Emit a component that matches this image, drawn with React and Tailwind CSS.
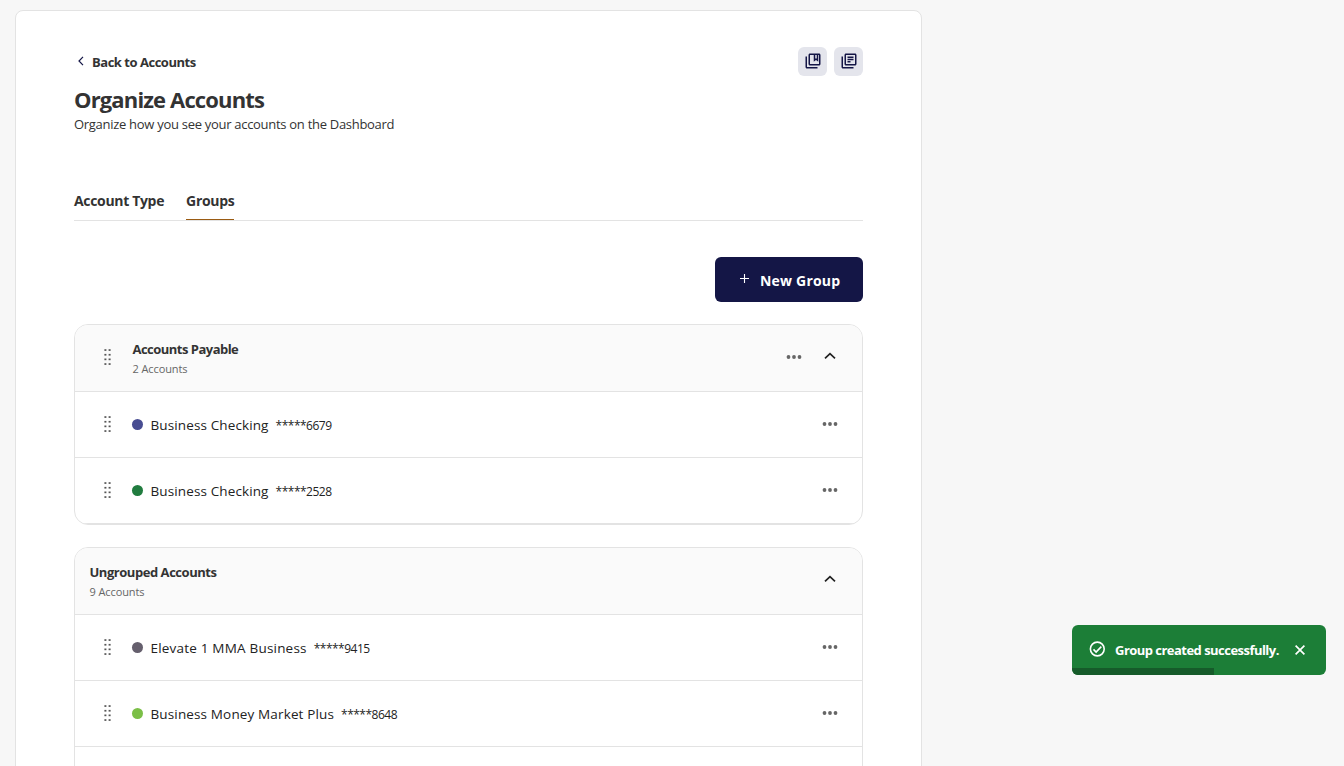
import React from 'react';
import { MdOutlineCollectionsBookmark, MdOutlineLibraryBooks } from 'react-icons/md';

const GROUPS = [
    {
        name: 'Accounts Payable',
        count: 2,
        custom: true,
        nameClass: 'tracking-[-0.52px]',
        accounts: [
            { name: 'Business Checking', number: '*****6679', dot: 'bg-[#484d92]', nameClass: 'tracking-[0.12px]' },
            { name: 'Business Checking', number: '*****2528', dot: 'bg-[#217c3f]', nameClass: 'tracking-[0.12px]' },
        ],
    },
    {
        name: 'Ungrouped Accounts',
        count: 9,
        custom: false,
        nameClass: 'tracking-[-0.46px]',
        accounts: [
            { name: 'Elevate 1 MMA Business', number: '*****9415', dot: 'bg-[#655f6d]', nameClass: 'tracking-[0.2px]' },
            { name: 'Business Money Market Plus', number: '*****8648', dot: 'bg-[#7bbf47]', nameClass: 'tracking-[0.14px]' },
        ],
    },
];

const DragHandle = () => (
    <svg width="7" height="16" viewBox="0 0 7 16" fill="#555" className="mb-0.5 shrink-0">
        {[0.2, 4.9, 9.5, 14.2].map((y) => (
            <React.Fragment key={y}>
                <rect x="0.4" y={y} width="2" height="1.7" />
                <rect x="4.6" y={y} width="2" height="1.7" />
            </React.Fragment>
        ))}
    </svg>
);

const MoreButton = () => (
    <button className="mb-0.5 flex h-6 w-6 items-center justify-center">
        <svg width="16" height="4" viewBox="0 0 16 4" fill="#666">
            <circle cx="2.5" cy="2" r="1.9" />
            <circle cx="8" cy="2" r="1.9" />
            <circle cx="13.5" cy="2" r="1.9" />
        </svg>
    </button>
);

const Collapse = () => (
    <button className="mb-1 flex h-6 w-6 items-center justify-center">
        <svg width="12" height="8" viewBox="0 0 12 8" fill="none" stroke="#222" strokeWidth="1.7">
            <path d="M1 6.4 6 1.6 11 6.4" />
        </svg>
    </button>
);

const AccountRow = ({ account }) => (
    <div className="flex h-[66px] items-center border-b border-[#e3e3e3] pr-5 pl-[29px]">
        <DragHandle />
        <span className={`ml-[21px] h-[11px] w-[11px] rounded-full ${account.dot}`} />
        <span className={`mt-0.5 ml-[7.5px] text-[13.5px] text-[#222] ${account.nameClass}`}>{account.name}</span>
        <span className="mt-0.5 ml-[7px] text-[12px] tracking-[-0.5px] text-[#222]">{account.number}</span>
        <div className="ml-auto">
            <MoreButton />
        </div>
    </div>
);

const Group = ({ group }) => (
    <section className={`overflow-hidden rounded-[14px] border border-[#e3e3e3] ${group.custom ? '' : 'h-[300px]'}`}>
        <div className={`flex h-[67px] items-center border-b border-[#e3e3e3] bg-[#fafafa] pr-5 ${group.custom ? 'pl-[29px]' : 'pl-3.5'}`}>
            {group.custom && <DragHandle />}
            <div className={`mt-0.5 ${group.custom ? 'ml-[21.5px]' : 'ml-[0.5px]'}`}>
                <h2 className={`text-[13px] leading-5 font-bold text-[#333] ${group.nameClass}`}>{group.name}</h2>
                <p className="text-[11px] leading-5 tracking-[-0.1px] text-[#666]">{group.count} Accounts</p>
            </div>
            <div className="ml-auto flex items-center gap-3">
                {group.custom && <MoreButton />}
                <Collapse />
            </div>
        </div>
        {group.accounts.map((account) => (
            <AccountRow key={account.number} account={account} />
        ))}
        {!group.custom && <div className="h-[66px] border-b border-[#e3e3e3]" />}
    </section>
);

const Toast = () => (
    <div className="absolute top-[625px] left-[1072px] flex h-[50px] w-[254px] items-center overflow-hidden rounded-md bg-[#1c7e37] pl-[17px] text-white">
        <svg width="16" height="16" viewBox="0 0 16 16" fill="none" stroke="#fff" strokeWidth="1.6" className="mb-0.5">
            <circle cx="8.3" cy="8" r="6.9" />
            <path d="M4.5 8.4 7.1 11 12.3 5.6" />
        </svg>
        <span className="mt-0.5 ml-[10px] text-[13px] font-bold tracking-[-0.53px] whitespace-nowrap">Group created successfully.</span>
        <svg width="10" height="10" viewBox="0 0 10 10" stroke="#fff" strokeWidth="1.7" className="mr-[21px] ml-auto">
            <path d="M.6.6 9.4 9.4M9.4.6.6 9.4" />
        </svg>
        <div className="absolute bottom-0 left-0 h-[7px] w-[142px] bg-[#165b2a]" />
    </div>
);

export default function App() {
    return (
        <div className="relative h-screen overflow-hidden bg-[#f7f7f7] pt-2.5 pl-[15px] font-['Open_Sans','Noto_Sans',sans-serif] text-[#333]">
            <main className="h-[900px] w-[907px] rounded-lg border border-[#e3e3e3] bg-white px-[58px] pt-9">
                <div className="flex h-[29px] items-center justify-between">
                    <a className="flex items-center pl-1 text-[13px] font-bold">
                        <svg width="6" height="10" viewBox="0 0 6 10" fill="none" stroke="#141646" strokeWidth="1.2" className="mr-2 mb-0.5">
                            <path d="M5 .8 1 5 5 9.2" />
                        </svg>
                        <span className="mt-0.5 tracking-[-0.48px]">Back to Accounts</span>
                    </a>
                    <div className="flex gap-[7px] text-[#141646]">
                        <button className="flex h-[29px] w-[29px] items-center justify-center rounded-md bg-[#e4e5ec] pb-px">
                            <MdOutlineCollectionsBookmark size={18} />
                        </button>
                        <button className="flex h-[29px] w-[29px] items-center justify-center rounded-md bg-[#e4e5ec] pb-px">
                            <MdOutlineLibraryBooks size={18} />
                        </button>
                    </div>
                </div>

                <h1 className="mt-[9px] text-[22px] leading-[29px] font-bold tracking-[-0.86px]">Organize Accounts</h1>
                <p className="text-[13px] leading-5 tracking-[-0.29px]">Organize how you see your accounts on the Dashboard</p>

                <nav className="mt-[54px] flex h-[33px] gap-[22px] border-b border-[#e3e3e3] text-[14px] leading-[26px] font-bold">
                    <a className="tracking-[-0.33px]">Account Type</a>
                    <a className="border-b border-[#9a5b13] tracking-[-0.33px]">Groups</a>
                </nav>

                <div className="mt-9 flex justify-end">
                    <button className="flex h-[45px] w-[148px] items-center rounded-md bg-[#141646] pl-6 text-[14px] font-bold text-white">
                        <svg width="11" height="11" viewBox="0 0 11 11" stroke="#fff" strokeWidth="1.1" className="mr-[10px] mb-0.5">
                            <path d="M5.5 1v9M1 5.5h9" />
                        </svg>
                        <span className="mt-px tracking-[0.2px]">New Group</span>
                    </button>
                </div>

                <div className="mt-[22px] flex flex-col gap-[22px]">
                    {GROUPS.map((group) => (
                        <Group key={group.name} group={group} />
                    ))}
                </div>
            </main>
            <Toast />
        </div>
    );
}
